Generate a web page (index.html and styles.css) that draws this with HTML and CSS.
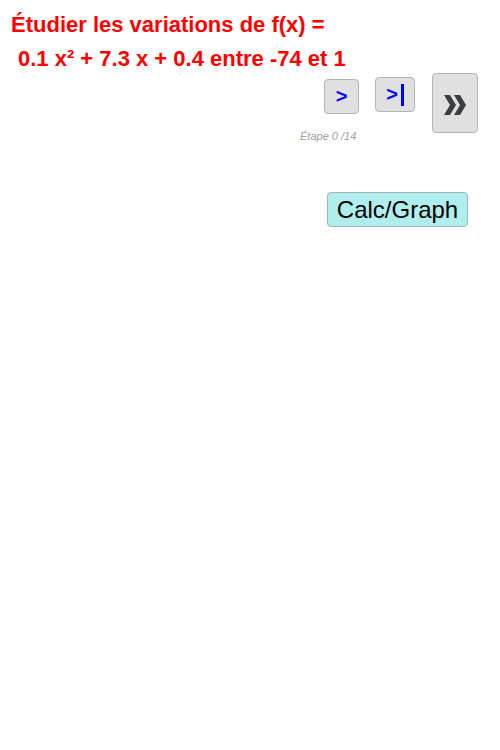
FILE: index.html
```html
<!DOCTYPE html>
<html>
<head>
<meta charset="utf-8">
<link rel="stylesheet" href="styles.css">
</head>
<body>
<div class="app">
  <div class="title">
    <div class="line1">Étudier les variations de f(x) =</div>
    <div class="line2">0.1 x² + 7.3 x + 0.4 entre -74 et 1</div>
  </div>
  <div class="controls">
    <div class="btn btn-step">&gt;</div>
    <div class="btn btn-end">&gt;<span class="bar"></span></div>
    <div class="btn btn-fast">
      <svg width="22" height="20" viewBox="0 0 22 20">
        <path d="M0 0 H6 L12 10 L6 20 H0 L6 10 Z" fill="#3a4040"/>
        <path d="M10 0 H16 L22 10 L16 20 H10 L16 10 Z" fill="#3a4040"/>
      </svg>
    </div>
  </div>
  <div class="step">Étape 0 /14</div>
  <div class="calc-row">
    <div class="calc">Calc/Graph</div>
  </div>
</div>
</body>
</html>
```
FILE: styles.css
```css
html, body {
  margin: 0;
  padding: 0;
  background: #ffffff;
}
.app {
  width: 500px;
  height: 750px;
  font-family: "Liberation Sans", Arial, sans-serif;
}
.title {
  color: #ff0000;
  font-weight: bold;
  font-size: 22px;
  padding-top: 8px;
}
.line1 {
  padding-left: 11px;
  line-height: 34px;
}
.line2 {
  padding-left: 18px;
  line-height: 34px;
}
.controls {
  display: flex;
  align-items: flex-start;
  padding-left: 324px;
  margin-top: -3px;
  height: 60px;
}
.btn {
  box-sizing: border-box;
  background: #e0e0e0;
  border: 1px solid #b4b4b4;
  border-radius: 4px;
  display: flex;
  align-items: center;
  justify-content: center;
  font-weight: bold;
  color: #0000ff;
  font-size: 20px;
}
.btn-step {
  width: 35px;
  height: 35px;
  margin-top: 6px;
}
.btn-end {
  width: 40px;
  height: 35px;
  margin-top: 4px;
  margin-left: 16px;
}
.bar {
  display: block;
  width: 3px;
  height: 22px;
  background: #0000ff;
  margin-left: 3px;
}
.btn-fast {
  width: 46px;
  height: 60px;
  margin-left: 17px;
  padding-top: 4px;
}
.step {
  font-style: italic;
  color: #a0a0a0;
  font-size: 11px;
  padding-left: 300px;
  margin-top: -3px;
  line-height: 12px;
}
.calc-row {
  padding-left: 327px;
  margin-top: 50px;
}
.calc {
  box-sizing: border-box;
  width: 141px;
  height: 35px;
  background: #b0eeee;
  border: 1px solid #a0b4b4;
  border-radius: 4px;
  font-size: 24px;
  color: #000;
  display: flex;
  align-items: center;
  justify-content: center;
}
```
